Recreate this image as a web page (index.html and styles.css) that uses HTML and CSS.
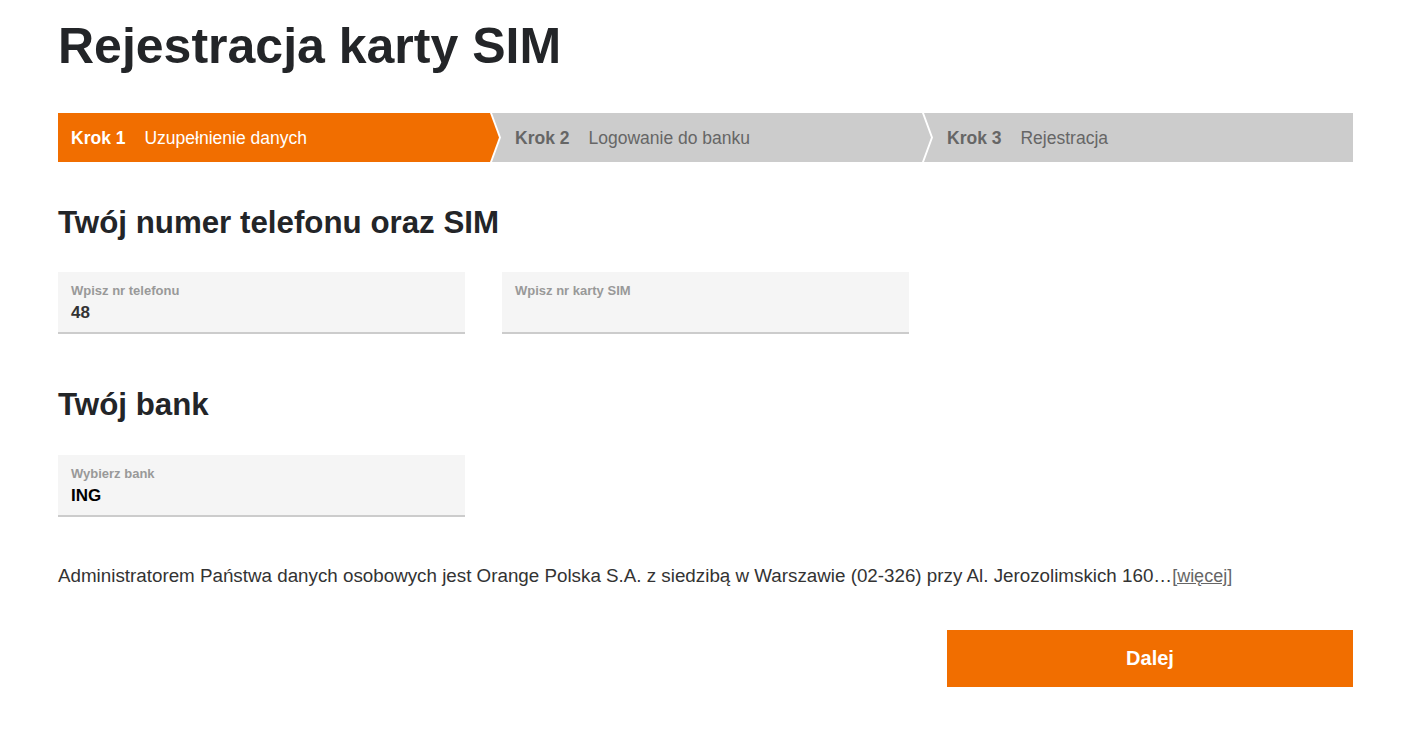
FILE: index.html
```html
<!DOCTYPE html>
<html lang="pl">
<head>
<meta charset="utf-8">
<title>Rejestracja karty SIM</title>
<link rel="stylesheet" href="styles.css">
</head>
<body>
<main class="page">
  <h1 class="title">Rejestracja karty SIM</h1>

  <ol class="steps">
    <li class="step step-first step-active"><span class="step-num">Krok 1</span><span class="step-label">Uzupełnienie danych</span></li>
    <li class="step step-mid"><span class="step-num">Krok 2</span><span class="step-label">Logowanie do banku</span></li>
    <li class="step step-last"><span class="step-num">Krok 3</span><span class="step-label">Rejestracja</span></li>
  </ol>

  <section class="section section-phone">
    <h2 class="section-title">Twój numer telefonu oraz SIM</h2>
    <div class="fields">
      <div class="field">
        <div class="field-label">Wpisz nr telefonu</div>
        <div class="field-value">48</div>
      </div>
      <div class="field">
        <div class="field-label">Wpisz nr karty SIM</div>
        <div class="field-value"></div>
      </div>
    </div>
  </section>

  <section class="section section-bank">
    <h2 class="section-title">Twój bank</h2>
    <div class="fields">
      <div class="field">
        <div class="field-label">Wybierz bank</div>
        <div class="field-value field-value-strong">ING</div>
      </div>
    </div>
  </section>

  <p class="notice">Administratorem Państwa danych osobowych jest Orange Polska S.A. z siedzibą w Warszawie (02-326) przy Al. Jerozolimskich 160…<a class="more" href="#">[więcej]</a></p>

  <div class="actions">
    <button class="btn-next" type="button">Dalej</button>
  </div>
</main>
</body>
</html>
```

FILE: styles.css
```css
* { box-sizing: border-box; }

html, body {
  margin: 0;
  padding: 0;
  background: #ffffff;
}

body {
  font-family: "Liberation Sans", Arial, Helvetica, sans-serif;
  color: #333333;
}

.page {
  width: 1295px;
  margin-left: 58px;
  padding-top: 16px;
}

.title {
  margin: 0;
  font-size: 50px;
  line-height: 60px;
  font-weight: 700;
  color: #232528;
}

.steps {
  list-style: none;
  margin: 37px 0 0;
  padding: 0;
  display: flex;
  height: 49px;
}

.step {
  flex: 0 0 439px;
  display: flex;
  align-items: center;
  background: #cccccc;
  color: #666666;
  font-size: 17.5px;
  padding-left: 23px;
  padding-top: 1px;
  margin-left: -7px;
  clip-path: polygon(0 0, calc(100% - 9px) 0, 100% 50%, calc(100% - 9px) 100%, 0 100%, 9px 50%);
}

.step-first {
  flex-basis: 441px;
  margin-left: 0;
  padding-left: 13px;
  clip-path: polygon(0 0, calc(100% - 9px) 0, 100% 50%, calc(100% - 9px) 100%, 0 100%);
}

.step-last {
  flex: 1 1 0;
  clip-path: polygon(0 0, 100% 0, 100% 100%, 0 100%, 9px 50%);
}

.step-active {
  background: #f16e00;
  color: #ffffff;
}

.step-num {
  font-weight: 700;
  margin-right: 19px;
}

.section {
  margin-top: 42px;
}

.section-bank {
  margin-top: 52px;
}

.section-title {
  margin: 0;
  font-size: 31.3px;
  line-height: 37px;
  font-weight: 700;
  color: #232528;
}

.fields {
  display: flex;
  gap: 37px;
  margin-top: 31px;
}

.section-bank .fields {
  margin-top: 32px;
}

.field {
  width: 407px;
  background: #f5f5f5;
  border-bottom: 2px solid #cccccc;
  padding: 11px 13px 8px;
}

.field-label {
  font-size: 13px;
  line-height: 16px;
  font-weight: 700;
  color: #999999;
  margin-bottom: 3px;
}

.field-value {
  font-size: 17px;
  line-height: 22px;
  height: 22px;
  font-weight: 700;
  color: #333333;
}

.field-value-strong {
  color: #000000;
}

.notice {
  margin: 45px 0 0;
  font-size: 18.8px;
  line-height: 27px;
  color: #333333;
}

.more {
  color: #666666;
  font-size: 18px;
  text-decoration: underline;
}

.actions {
  display: flex;
  justify-content: flex-end;
  margin-top: 40px;
}

.btn-next {
  width: 406px;
  height: 57px;
  border: 0;
  background: #f16e00;
  color: #ffffff;
  font-family: "Liberation Sans", Arial, Helvetica, sans-serif;
  font-size: 20px;
  font-weight: 700;
  cursor: pointer;
}
```
